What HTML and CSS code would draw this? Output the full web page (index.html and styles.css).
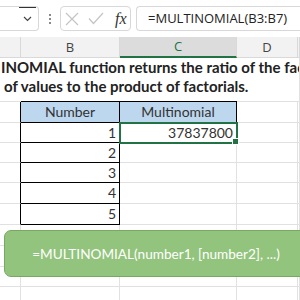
FILE: index.html
```html
<!DOCTYPE html>
<html lang="en">
<head>
    <meta charset="UTF-8">
    <title>MULTINOMIAL</title>
    <link rel="stylesheet" href="styles.css">
</head>
<body>
    <div class="formula-bar">
        <div class="name-box">
            <span class="drop">
                <svg width="9" height="6" viewBox="0 0 9 6"><polyline points="1,1 4.5,4.5 8,1" fill="none" stroke="#444" stroke-width="1.2"/></svg>
            </span>
        </div>
        <div class="grip"><i></i><i></i><i></i></div>
        <div class="fx-box">
            <svg class="icon-x" width="14" height="14" viewBox="0 0 14 14"><path d="M1 1L13 13M13 1L1 13" stroke="#c4c4c4" stroke-width="1.2"/></svg>
            <svg class="icon-ok" width="16" height="13" viewBox="0 0 16 13"><polyline points="1,6.5 5.5,11.5 15,1" fill="none" stroke="#c4c4c4" stroke-width="1.2"/></svg>
            <span class="fx">fx</span>
        </div>
        <div class="formula">=MULTINOMIAL(B3:B7)</div>
    </div>

    <div class="sheet">
        <div class="cell head"></div>
        <div class="cell head">B</div>
        <div class="cell head sel">C</div>
        <div class="cell head">D</div>
        <div class="cell head"></div>

        <div class="cell title">
            <div class="line1">INOMIAL function returns the ratio of the factorial of a sum</div>
            <div class="line2">of values to the product of factorials.</div>
        </div>

        <div class="cell edge"></div>
        <div class="cell th first">Number</div>
        <div class="cell th">Multinomial</div>
        <div class="cell"></div>
        <div class="cell"></div>

        <div class="cell edge"></div>
        <div class="cell tb">1</div>
        <div class="cell num active">37837800</div>
        <div class="cell"></div>
        <div class="cell"></div>

        <div class="cell edge"></div>
        <div class="cell tb">2</div>
        <div class="cell"></div>
        <div class="cell"></div>
        <div class="cell"></div>

        <div class="cell edge"></div>
        <div class="cell tb">3</div>
        <div class="cell"></div>
        <div class="cell"></div>
        <div class="cell"></div>

        <div class="cell edge"></div>
        <div class="cell tb">4</div>
        <div class="cell"></div>
        <div class="cell"></div>
        <div class="cell"></div>

        <div class="cell edge"></div>
        <div class="cell tb">5</div>
        <div class="cell"></div>
        <div class="cell"></div>
        <div class="cell"></div>

        <div class="cell"></div><div class="cell"></div><div class="cell"></div><div class="cell"></div><div class="cell"></div>
        <div class="cell"></div><div class="cell"></div><div class="cell"></div><div class="cell"></div><div class="cell"></div>
        <div class="cell"></div><div class="cell"></div><div class="cell"></div><div class="cell"></div><div class="cell"></div>
        <div class="cell"></div><div class="cell"></div><div class="cell"></div><div class="cell"></div><div class="cell"></div>
    </div>

    <div class="banner">=MULTINOMIAL(number1, [number2], ...)</div>
</body>
</html>
```

FILE: styles.css
```css
/* sheet look */
body {
    margin: 0;
    width: 300px;
    height: 300px;
    overflow: hidden;
    position: relative;
    background: #fff;
    font-family: "Lato", "Open Sans", sans-serif;
}

/* formula bar */
.formula-bar {
    height: 37px;
    box-sizing: border-box;
    padding-top: 6px;
    display: flex;
    align-items: flex-start;
}

.name-box {
    width: 39px;
    height: 25px;
    box-sizing: border-box;
    border: 1px solid #d8d8d8;
    border-left: none;
    border-radius: 0 4px 4px 0;
    display: flex;
    justify-content: flex-end;
}

.drop {
    width: 17px;
    margin-right: 2px;
    border-top: 1px solid #333;
    display: flex;
    align-items: center;
    justify-content: center;
}

.grip {
    width: 21px;
    padding-top: 8px;
    display: flex;
    flex-direction: column;
    align-items: center;
    gap: 2px;
}

.grip i {
    width: 2px;
    height: 2px;
    background: #8a8a8a;
}

.fx-box {
    width: 71px;
    height: 25px;
    box-sizing: border-box;
    border: 1px solid #d8d8d8;
    border-radius: 4px;
    display: flex;
    align-items: center;
    padding-left: 4px;
}

.icon-ok {
    margin-left: 9px;
}

.fx {
    margin-left: 11px;
    font-family: "Liberation Serif", serif;
    font-style: italic;
    font-size: 16px;
    color: #333;
}

.formula {
    flex: 1;
    height: 25px;
    margin-left: 5px;
    box-sizing: border-box;
    border: 1px solid #d8d8d8;
    border-right: none;
    border-radius: 4px 0 0 4px;
    padding-left: 11px;
    font-family: "Open Sans", sans-serif;
    font-size: 13px;
    line-height: 23px;
    color: #222;
    white-space: nowrap;
}

/* grid */
.sheet {
    display: grid;
    grid-template-columns: 21px 99px 117px 61px 1fr;
    grid-template-rows: 21px 44px 21px 20px 20px 20px 21px 21px 21px 21px 20px 21px;
}

.cell {
    box-sizing: border-box;
    border-right: 1px solid #e1e1e1;
    border-bottom: 1px solid #e1e1e1;
    font-size: 14px;
    color: #333;
}

.head {
    background: #f2f2f2;
    border-color: #d9d9d9;
    font-family: "Open Sans", sans-serif;
    font-size: 13px;
    color: #444;
    text-align: center;
    line-height: 20px;
}

.head.sel {
    background: #dcdcdc;
    color: #217346;
    border-bottom: 2px solid #217346;
    line-height: 19px;
}

.title {
    grid-column: 1 / -1;
    overflow: hidden;
    white-space: nowrap;
    font-weight: bold;
    font-size: 15px;
    line-height: 19px;
    color: #222;
}

.line1 {
    padding-left: 1px;
}

.line2 {
    padding-left: 4px;
}

.edge {
    border-right-color: #000;
}

.th {
    background: #bdd7ee;
    border-right-color: #000;
    border-bottom-color: #000;
    box-shadow: 0 -1px 0 #000;
    text-align: center;
    line-height: 20px;
}

.tb,
.num {
    text-align: right;
    padding-right: 3px;
    line-height: 20px;
}

.tb {
    border-right-color: #000;
    border-bottom-color: #000;
}

.active {
    position: relative;
    outline: 2px solid #217346;
    outline-offset: -1px;
}

.active::after {
    content: "";
    position: absolute;
    right: -3px;
    bottom: -3px;
    width: 5px;
    height: 5px;
    background: #217346;
    border: 1px solid #fff;
}

/* tooltip banner */
.banner {
    position: absolute;
    left: 4px;
    top: 230px;
    width: 304px;
    height: 47px;
    box-sizing: border-box;
    background: #93c47d;
    border: 1px solid #78a862;
    border-radius: 7px;
    color: #fff;
    font-size: 13.6px;
    display: flex;
    align-items: center;
    justify-content: center;
}
```
